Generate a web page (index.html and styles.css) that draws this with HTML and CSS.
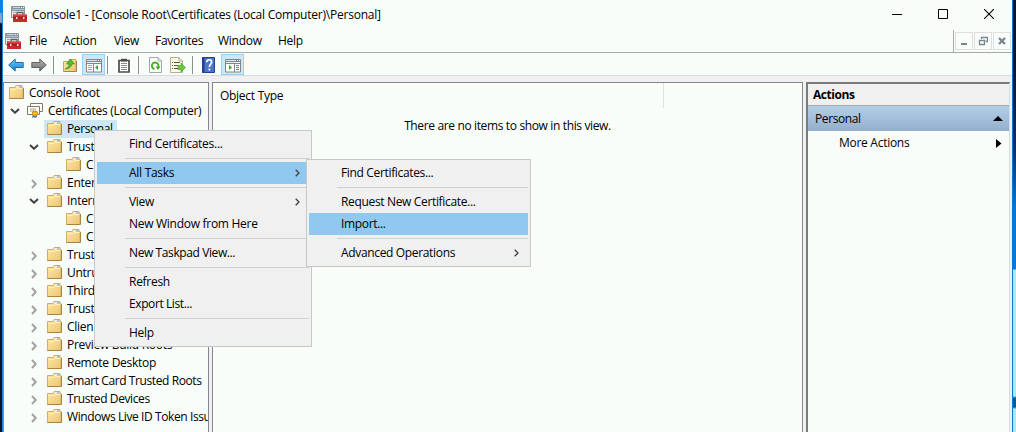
FILE: index.html
```html
<!DOCTYPE html>
<html lang="en">
<head>
<meta charset="utf-8">
<title>Console1 - Certificates</title>
<link rel="stylesheet" href="styles.css">
</head>
<body>
<svg class="defs" width="0" height="0">
  <defs>
    <linearGradient id="fg" x1="0" y1="0" x2="1" y2="1"><stop offset="0" stop-color="#ffe9a6"/><stop offset="1" stop-color="#ebc470"/></linearGradient>
    <linearGradient id="blue" x1="0" y1="0" x2="0" y2="1"><stop offset="0" stop-color="#6fd0fb"/><stop offset="1" stop-color="#0a80d0"/></linearGradient>
    <linearGradient id="grey" x1="0" y1="0" x2="0" y2="1"><stop offset="0" stop-color="#b5b5b5"/><stop offset="1" stop-color="#6c6c6c"/></linearGradient>
    <symbol id="folder" viewBox="0 0 15 14">
      <path d="M.5 2.500h5.500l1-2h6v2h1v11H.5z" fill="url(#fg)" stroke="#d3ac5c"/>
      <path d="M7.500 1.500h5v1H7z" fill="#fff"/><path d="M10 1.500h2.500v1H10z" fill="#4a9fd8"/>
      <path d="M1.500 4.500h5.500l1-1h5.500" fill="none" stroke="#fff0bd"/><path d="M.5 13.500h14V3" fill="none" stroke="#a98443"/>
    </symbol>
    <symbol id="down" viewBox="0 0 10 6"><path d="M1 1l4 3.700L9 1" fill="none" stroke="#404040" stroke-width="2"/></symbol>
    <symbol id="right" viewBox="0 0 6 10"><path d="M1 1l3.700 4L1 9" fill="none" stroke="#a0a3a1" stroke-width="2"/></symbol>
    <symbol id="sub" viewBox="0 0 5 8"><path d="M.7.7L4 4 .7 7.300" fill="none" stroke="#404040" stroke-width="1.300"/></symbol>
    <symbol id="mmc" viewBox="0 0 16 16">
      <path d="M.5.500h13v11H.5z" fill="#e9edf0" stroke="#87919a"/><path d="M1 1h12v2.500H1z" fill="#8795a2"/>
      <path d="M2 1.500h7" stroke="#c9d2d9"/><path d="M10 1.500h1m1 0h1" stroke="#fff"/><path d="M1 4.500h12" stroke="#8795a2"/><path d="M2 6.500h3M2 8.500h2" stroke="#9ba4ab"/>
      <path d="M6 9V6.500h6V9" fill="none" stroke="#5b5f63" stroke-width="1.300"/>
      <path d="M2 8.500h14V16H2z" fill="#c92b28"/><path d="M3 8.500h12v1H3z" fill="#e5605b"/><path d="M2 12h14" stroke="#8d1718"/>
      <path d="M5 11h1.500v2H5zM12 11h1.500v2H12z" fill="#f0e4e4"/>
    </symbol>
    <symbol id="pane" viewBox="0 0 16 14">
      <path d="M.5.500h15v12.500H.5z" fill="#fff" stroke="#7d8790"/><path d="M1 1h14v3H1z" fill="#7d8790"/><path d="M1 1.500h10" stroke="#dfe4e8"/><path d="M12 1.500h1m1 0h1" stroke="#fff"/><path d="M1 3.500h14" stroke="#eef1f3"/><path d="M1 4.500h14" stroke="#7d8790"/>
    </symbol>
  </defs>
</svg>
<div class="desktop">
  <div class="edge edge-left"></div>
  <main class="window">
    <header class="titlebar">
      <svg class="app-icon" width="16" height="16"><use href="#mmc"/></svg>
      <span class="title">Console1 - [Console Root\Certificates (Local Computer)\Personal]</span>
      <div class="caption">
        <svg width="10" height="10"><path d="M0 5.500h10" stroke="#000"/></svg>
        <svg width="10" height="10"><path d="M.5.500h9v9h-9z" fill="none" stroke="#000"/></svg>
        <svg width="10" height="10"><path d="M0 0l10 10M10 0L0 10" stroke="#000" stroke-width="1.100"/></svg>
      </div>
    </header>
    <nav class="menubar">
      <svg class="app-icon" width="16" height="16"><use href="#mmc"/></svg>
      <span class="m-file">File</span><span class="m-action">Action</span><span class="m-view">View</span><span class="m-fav">Favorites</span><span class="m-window">Window</span><span>Help</span>
      <div class="mdi">
        <i><svg width="10" height="10"><path d="M2 8h6" stroke="#75868f" stroke-width="2"/></svg></i>
        <i><svg width="10" height="10"><path d="M3.500 3V1.500h6v4H8M3 1.500h7M1 4.500h6.500M1.500 4v4.500h5V4" fill="none" stroke="#75868f" stroke-width="1.300"/></svg></i>
        <i><svg width="10" height="10"><path d="M2 2l6 6M8 2L2 8" stroke="#75868f" stroke-width="2.300"/></svg></i>
      </div>
    </nav>
    <div class="toolbar">
      <svg class="arrow" width="16" height="14"><path d="M.7 7l6.500-6v3.500h8v5h-8V13z" fill="url(#blue)" stroke="#1e6da8"/></svg>
      <svg class="arrow" width="16" height="14"><path d="M15.300 7l-6.500-6v3.500h-8v5h8V13z" fill="url(#grey)" stroke="#626262"/></svg>
      <b class="sep s1"></b>
      <svg class="t-up" width="14" height="15"><path d="M.5 3.500h5l1-2h6.500v12H.5z" fill="url(#fg)" stroke="#cda555"/><path d="M.5 13.500h13V3" fill="none" stroke="#a98443"/><path d="M2 11c3-1 4-3 4-5H3.500L7.500 1l4 5H9c-.5 3-3 5-7 5z" fill="#51bd2b" stroke="#2f8c18" stroke-width=".6"/></svg>
      <div class="toggle t-tree"><svg width="16" height="14"><use href="#pane"/><path d="M7.500 5v8" stroke="#7d8790"/><path d="M2 6.500h4M2 8.500h4M2 10.500h4" stroke="#8aa7bf"/><path d="M12 6v5L9 8.500z" fill="#35a91c"/></svg></div>
      <b class="sep s2"></b>
      <svg class="t-clip" width="12" height="15"><path d="M1 2.500h10V14H1z" fill="#fff" stroke="#4b4b4b" stroke-width="1.700"/><path d="M3 .8h6v2.700H3z" fill="#4b4b4b"/><path d="M3 5.500h6M3 7.500h6M3 9.500h6M3 11.500h6" stroke="#8b8b8b"/></svg>
      <b class="sep s3"></b>
      <svg class="t-ref" width="13" height="16"><path d="M.5.500h8.500l3.500 3.500v11.500H.5z" fill="#fff" stroke="#a3a9a6"/><path d="M9 .5V4h3.500" fill="none" stroke="#a3a9a6"/><path d="M5.500 12A3.300 3.300 0 1 1 9 10.500" fill="none" stroke="#3eae24" stroke-width="1.900"/><path d="M6.500 9.500h5L9 13z" fill="#3eae24"/></svg>
      <svg class="t-exp" width="16" height="16"><path d="M.5.500h8.500l3.500 3.500v11.500H.5z" fill="#fdf8df" stroke="#b4ae93"/><path d="M9 .5V4h3.500" fill="none" stroke="#b4ae93"/><path d="M2 5.500h1M2 8.500h1M2 11.500h1M4 5.500h6M4 8.500h4M4 11.500h4" stroke="#555"/><path d="M8 8.500h3V6l4.500 4.500L11 15v-2.500H8z" fill="#69c93d" stroke="#3b9a20" stroke-width=".6"/></svg>
      <b class="sep s4"></b>
      <svg class="t-help" width="13" height="16"><path d="M.5.500h12v15H.5z" fill="#4a74cb" stroke="#243e8e"/><path d="M.5 0h2v16h-2z" fill="#263f92"/><path d="M4.700 5.300c0-3.500 5-3.200 5-.2 0 2.100-2.300 2.100-2.300 5M7.400 11.500v2" fill="none" stroke="#fff" stroke-width="1.700"/></svg>
      <div class="toggle t-act"><svg width="16" height="14"><use href="#pane"/><path d="M9.500 5v8" stroke="#7d8790"/><path d="M11 6.500h3M11 8.500h3M11 10.500h3" stroke="#3d84c5"/><path d="M4 6v5l3-2.500z" fill="#35a91c"/></svg></div>
    </div>
    <section class="body">
      <div class="panel tree">
        <div class="row l0"><svg class="f" width="15" height="14"><use href="#folder"/></svg><span>Console Root</span></div>
        <div class="row l1"><svg class="x" width="10" height="6"><use href="#down"/></svg>
          <svg class="cert" width="16" height="16"><path d="M3.500.500h12v8h-12z" fill="#fff" stroke="#80796a"/><path d="M.5 3.500h12v8H.5z" fill="#fffef6" stroke="#80796a"/><path d="M3 6h6M3 8h4" stroke="#a5a08e"/><path d="M6 11l-1 4 2-1 1 1 2-1-1-3z" fill="#2871cf"/><circle cx="8" cy="10.500" r="2.600" fill="#f5b927" stroke="#c47f0d"/></svg><span>Certificates (Local Computer)</span></div>
        <div class="row l2"><i class="x"></i><div class="selected"><svg class="f" width="15" height="14"><use href="#folder"/></svg><span>Personal</span></div></div>
        <div class="row l2"><svg class="x" width="10" height="6"><use href="#down"/></svg><svg class="f" width="15" height="14"><use href="#folder"/></svg><span>Trust</span></div>
        <div class="row l3"><svg class="f" width="15" height="14"><use href="#folder"/></svg><span>C</span></div>
        <div class="row l2"><svg class="x r" width="10" height="10"><use href="#right"/></svg><svg class="f" width="15" height="14"><use href="#folder"/></svg><span>Enter</span></div>
        <div class="row l2"><svg class="x" width="10" height="6"><use href="#down"/></svg><svg class="f" width="15" height="14"><use href="#folder"/></svg><span>Intern</span></div>
        <div class="row l3"><svg class="f" width="15" height="14"><use href="#folder"/></svg><span>C</span></div>
        <div class="row l3"><svg class="f" width="15" height="14"><use href="#folder"/></svg><span>C</span></div>
        <div class="row l2"><svg class="x r" width="10" height="10"><use href="#right"/></svg><svg class="f" width="15" height="14"><use href="#folder"/></svg><span>Trust</span></div>
        <div class="row l2"><svg class="x r" width="10" height="10"><use href="#right"/></svg><svg class="f" width="15" height="14"><use href="#folder"/></svg><span>Untru</span></div>
        <div class="row l2"><svg class="x r" width="10" height="10"><use href="#right"/></svg><svg class="f" width="15" height="14"><use href="#folder"/></svg><span>Third</span></div>
        <div class="row l2"><svg class="x r" width="10" height="10"><use href="#right"/></svg><svg class="f" width="15" height="14"><use href="#folder"/></svg><span>Trust</span></div>
        <div class="row l2"><svg class="x r" width="10" height="10"><use href="#right"/></svg><svg class="f" width="15" height="14"><use href="#folder"/></svg><span>Clien</span></div>
        <div class="row l2"><svg class="x r" width="10" height="10"><use href="#right"/></svg><svg class="f" width="15" height="14"><use href="#folder"/></svg><span>Preview Build Roots</span></div>
        <div class="row l2"><svg class="x r" width="10" height="10"><use href="#right"/></svg><svg class="f" width="15" height="14"><use href="#folder"/></svg><span>Remote Desktop</span></div>
        <div class="row l2"><svg class="x r" width="10" height="10"><use href="#right"/></svg><svg class="f" width="15" height="14"><use href="#folder"/></svg><span class="tight">Smart Card Trusted Roots</span></div>
        <div class="row l2"><svg class="x r" width="10" height="10"><use href="#right"/></svg><svg class="f" width="15" height="14"><use href="#folder"/></svg><span class="tight">Trusted Devices</span></div>
        <div class="row l2"><svg class="x r" width="10" height="10"><use href="#right"/></svg><svg class="f" width="15" height="14"><use href="#folder"/></svg><span class="tight">Windows Live ID Token Issu</span></div>
      </div>
      <div class="panel list">
        <div class="list-head"><span>Object Type</span></div>
        <p class="empty"><span>There are no items to show in this view.</span></p>
      </div>
      <aside class="actions">
        <h2><span>Actions</span></h2>
        <div class="group"><span>Personal</span><svg width="10" height="5"><path d="M0 5l5-5 5 5z"/></svg></div>
        <div class="more"><span>More Actions</span><svg width="6" height="9"><path d="M0 0l5.500 4.500L0 9z"/></svg></div>
      </aside>
    </section>
  </main>
  <div class="edge edge-right"></div>
</div>
<div class="menu context">
  <div class="item"><span>Find Certificates...</span></div><hr>
  <div class="item hot"><span>All Tasks</span><svg width="5" height="8"><use href="#sub"/></svg></div><hr>
  <div class="item"><span>View</span><svg width="5" height="8"><use href="#sub"/></svg></div>
  <div class="item"><span>New Window from Here</span></div><hr>
  <div class="item"><span class="tight">New Taskpad View...</span></div><hr>
  <div class="item"><span>Refresh</span></div>
  <div class="item"><span class="tight">Export List...</span></div><hr>
  <div class="item"><span>Help</span></div>
</div>
<div class="menu submenu">
  <div class="item"><span>Find Certificates...</span></div><hr>
  <div class="item"><span>Request New Certificate...</span></div>
  <div class="item hot"><span>Import...</span></div><hr>
  <div class="item"><span>Advanced Operations</span><svg width="5" height="8"><use href="#sub"/></svg></div>
</div>
</body>
</html>
```
FILE: styles.css
```css
* { box-sizing: border-box; }
body { margin: 0; width: 1016px; height: 432px; overflow: hidden; position: relative; font: 12px/18px "Open Sans", "Noto Sans", sans-serif; letter-spacing: -0.28px; color: #000; }
svg { display: block; flex: none; }
span { white-space: nowrap; }
.tight { letter-spacing: -0.4px; }
.defs { position: absolute; }
.desktop { display: flex; height: 432px; }
.edge { flex: none; }
.edge-left { width: 3px; background: linear-gradient(#0a83dc 0 12px, #8aa5bd 14px 22px, #04142e 24px); border-right: 1px solid #1a86dc; }
.edge-right { width: 4px; border-left: 1px solid #0a78d3; background: linear-gradient(#031536 0 60px, #04326e 150px, #0579d8 210px 269px, #a5eaf8 270px 396px, #075c9c 398px 407px, #a5eaf8 409px); }
.window { width: 1009px; background: #f8fdfa; display: flex; flex-direction: column; }
.titlebar { height: 30px; padding: 0 18px 0 8px; display: flex; align-items: center; }
.titlebar .app-icon { margin-top: -2px; }
.title { margin-left: 5px; letter-spacing: -0.22px; }
.caption { margin: -2px 0 0 auto; display: flex; gap: 36px; }
.menubar { height: 23px; padding-left: 2px; border-bottom: 1px solid #a6aaa9; display: flex; align-items: center; }
.menubar > span:first-of-type { margin-left: 8px; }
.m-file { width: 34px; } .m-action { width: 51px; } .m-view { width: 41px; } .m-fav { width: 63px; } .m-window { width: 60px; }
.mdi { margin-left: auto; height: 22px; border-left: 1px solid #a6aaa9; padding: 2px 1px 0; display: flex; gap: 1px; }
.mdi i { width: 18px; height: 18px; border: 1px solid #dde0df; display: grid; place-items: center; }
.toolbar { height: 23px; border-bottom: 1px solid #d9dcdb; padding: 1px 0 0 5px; display: flex; align-items: center; }
.toolbar > svg { margin-top: 1px; }
.arrow + .arrow { margin-left: 7px; }
.sep { width: 1px; height: 18px; background: #8d908f; }
.s1 { margin-left: 6px; } .t-up { margin-left: 9px; } .t-tree { margin-left: 5px; } .s2 { margin-left: 2px; } .t-clip { margin-left: 10px; } .s3 { margin-left: 8px; } .t-ref { margin-left: 10px; } .t-exp { margin-left: 8px; } .s4 { margin-left: 6px; } .t-help { margin-left: 9px; } .t-act { margin-left: 6px; }
.toggle { width: 23px; height: 21px; background: #cce8f6; border: 1px solid #99d1f5; display: grid; place-items: center; padding-top: 3px; }
.body { flex: 1; background: #f0f0f0; padding: 6px 2px 0 0; display: flex; }
.panel { background: #f8fdfa; border: 1px solid #828790; border-bottom: 0; overflow: hidden; }
.tree { width: 206px; padding-top: 1px; }
.row { height: 18px; display: flex; align-items: center; }
.l0 { padding-left: 5px; } .l1 { padding-left: 7px; } .l2 { padding-left: 26px; } .l3 { padding-left: 62px; }
.f { margin-right: 5px; margin-top: -2px; }
.x { width: 10px; margin-right: 7px; margin-left: -1px; padding: 0; flex: none; }
.x + * { margin-left: 1px; }
.r { margin-top: 2px; }
.l1 .cert { margin-right: 5px; margin-left: 0; }
.x + .selected { display: flex; align-items: center; height: 18px; margin-left: -2px; padding: 0 4px 0 3px; background: #cce8f6; letter-spacing: -0.4px; }
.list { width: 591px; margin-left: 3px; }
.list-head { height: 25px; width: 451px; padding: 4px 0 0 7px; border-right: 1px solid #dfe2e1; }
.empty { margin: 9px 0 0; text-align: center; letter-spacing: -0.36px; }
.actions { width: 204px; margin-left: 3px; background: #f8fdfa; border-left: 2px solid #777b7a; border-top: 2px solid #777b7a; border-right: 1px solid #d9dcdb; }
.actions h2 { margin: 0; height: 22px; padding: 2px 5px; background: #f0f0f0; border-bottom: 1px solid #a6aaa9; font-size: 12px; line-height: 18px; letter-spacing: -0.45px; }
.group { height: 25px; background: linear-gradient(#b4cfe8, #93afcc); padding: 0 6px 0 7px; display: flex; justify-content: space-between; align-items: center; letter-spacing: -0.4px; }
.more { height: 24px; padding: 0 7px 0 31px; display: flex; justify-content: space-between; align-items: center; }
.menu { position: absolute; background: #f0f0f0; border: 1px solid #c5cac7; padding: 2px; }
.context { left: 94px; top: 130px; width: 218px; }
.submenu { left: 306px; top: 159px; width: 225px; }
.submenu .item { letter-spacing: -0.34px; }
.item { height: 22px; padding: 0 9px 0 32px; display: flex; align-items: center; justify-content: space-between; }
.hot { background: #91c8f0; }
.menu hr { margin: 3px 0 3px 28px; height: 1px; border: 0; background: #cdd2cf; }
```
